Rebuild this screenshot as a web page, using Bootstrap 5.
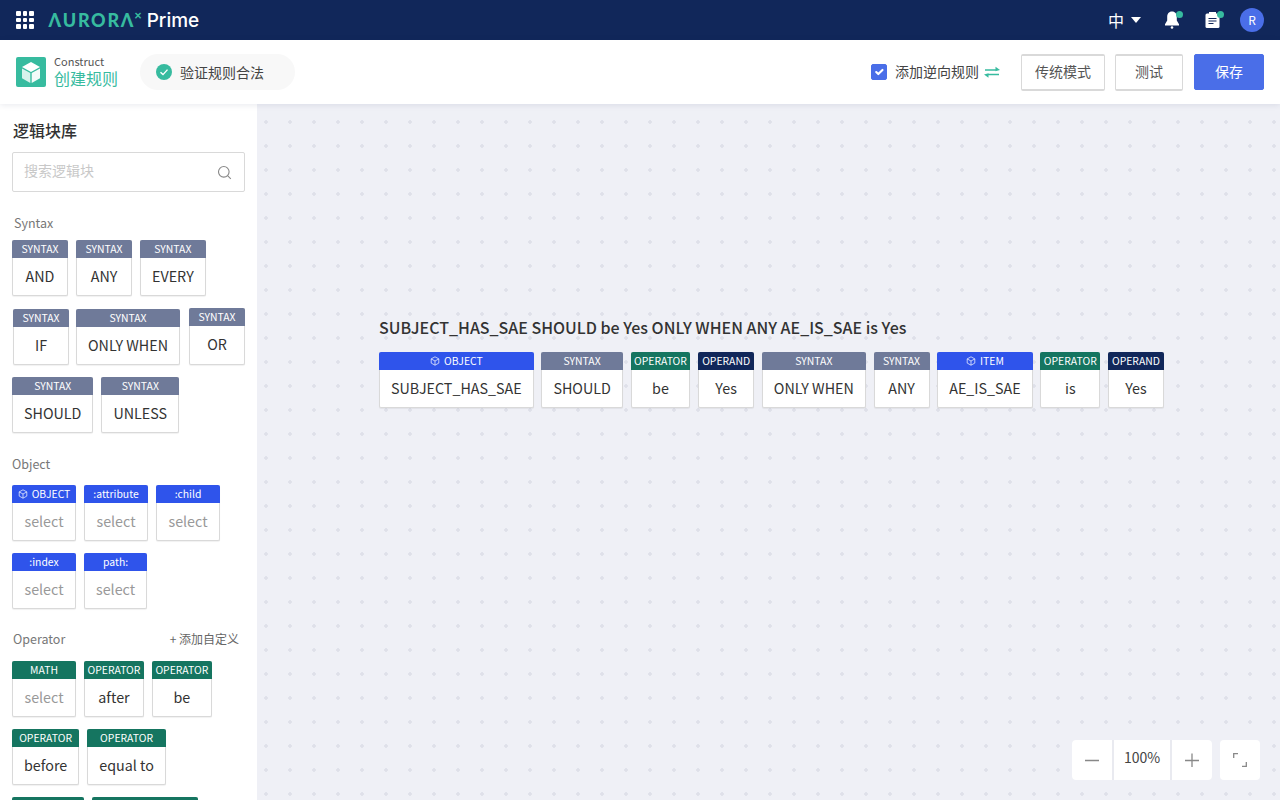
<!DOCTYPE html>
<html lang="zh">
<head>
    <meta charset="UTF-8">
    <title>创建规则</title>
    <link href="https://cdn.jsdelivr.net/npm/bootstrap@5.3.0/dist/css/bootstrap.min.css" rel="stylesheet">
    <script src="https://cdn.jsdelivr.net/npm/bootstrap@5.3.0/dist/js/bootstrap.bundle.min.js"></script>
    <style>
        html, body { height: 100%; overflow: hidden; }
        body { font-family: "Noto Sans CJK SC", "Noto Sans", sans-serif; color: #333; background: #eff0f6; }
        .top-bar { height: 40px; background: #11275a; padding: 0 16px; flex-wrap: nowrap; }
        .grid-icon { display: grid; grid-template-columns: repeat(3, 4.5px); gap: 2px; margin-right: 15px; }
        .grid-icon i { width: 4.5px; height: 4.5px; background: #fff; border-radius: 1px; }
        .logo-word { font-family: "Lato", sans-serif; font-weight: 900; font-size: 18px; letter-spacing: 1.7px; color: #37bb9f; line-height: 1; }
        .logo-x { font-size: 13px; font-weight: 900; color: #37bb9f; margin-left: -1px; margin-top: -9px; line-height: 1; font-family: "Lato", sans-serif; }
        .logo-prime { font-family: "Inter", sans-serif; font-size: 19px; font-weight: 500; color: #fff; margin-left: 5px; line-height: 1; }
        .lang-text { color: #fff; font-size: 16px; line-height: 1; }
        .caret-down { width: 0; height: 0; border-left: 5px solid transparent; border-right: 5px solid transparent; border-top: 6px solid #fff; margin-left: 7px; }
        .notice-wrap { position: relative; display: block; width: 20px; height: 20px; }
        .notice-wrap svg { display: block; }
        .notice-wrap.bell-spot { margin-left: 21px; }
        .notice-wrap.clip-spot { margin-left: 21px; margin-right: 17px; }
        .notice-dot { position: absolute; top: 1px; right: -1px; width: 7px; height: 7px; border-radius: 50%; background: #37bb9f; }
        .user-dot { width: 24px; height: 24px; border-radius: 50%; background: #4a6ee8; color: #fff; font-size: 12px; }
        .sub-bar { height: 64px; background: #fff; padding: 0 16px; box-shadow: 0 1px 6px rgba(30, 40, 90, .1); position: relative; z-index: 2; }
        .cube-box { width: 30px; height: 30px; background: #37bb9f; border-radius: 2px; }
        .crumb-small { font-size: 11px; line-height: 13px; color: #555; margin-top: -1px; }
        .crumb-big { font-size: 16px; line-height: 20px; color: #37bb9f; }
        .check-pill { height: 36px; width: 155px; margin-left: 22px; padding-left: 16px; background: #f8f8f8; border-radius: 18px; font-size: 14px; color: #444; line-height: 34px; }
        .ok-dot { width: 16px; height: 16px; background: #37bb9f; border-radius: 50%; margin-right: 8px; }
        .form-check-input.swap-check, .form-check-input.swap-check:checked { width: 16px; height: 16px; margin: 0 8px 0 1px; background-color: #4a6ee8; border-color: #4a6ee8; border-radius: 2px; }
        .swap-label { font-size: 14px; color: #444; line-height: 1; padding-bottom: 2px; }
        .btn-plain { height: 37px; padding: 0 0 2px; font-size: 14px; color: #555; background: #fff; border: 1px solid #d9d9d9; border-width: 2px 1px; border-radius: 2px; }
        .btn-plain.w1 { width: 84px; margin-left: 20px; }
        .btn-plain.w2 { width: 68px; margin-left: 10px; }
        .btn-keep { width: 70px; height: 36px; padding: 0 0 2px; margin-left: 11px; font-size: 14px; background: #4a6ee8; border-color: #4a6ee8; border-radius: 2px; }
        .main-area { height: 696px; }
        .side-panel { width: 257px; height: 696px; overflow: hidden; background: #fff; padding: 16px 10px 0 12px; flex-shrink: 0; }
        .side-title { font-size: 16px; font-weight: 500; line-height: 22px; margin: -1px 0 11px 1px; color: #333; }
        .search-box { height: 40px; border: 1px solid #d9d9d9; border-radius: 2px; padding: 0 12px 0 11px; margin-bottom: 22px; width: 233px; }
        .search-box input { border: 0; outline: 0; padding: 0 0 3px; font-size: 14px; box-shadow: none; }
        .search-box input::placeholder { color: #c8c8c8; }
        .group-label { font-size: 12.5px; line-height: 18px; color: #777; }
        .syntax-label { margin-left: 2px; margin-bottom: 8px; }
        .object-label { margin-top: 22px; margin-bottom: 12px; }
        .operator-row { margin-top: 21px; margin-bottom: 13px; padding-left: 1px; }
        .custom-add { font-size: 12px; color: #666; padding-right: 8px; line-height: 18px; }
        .block-wrap { display: flex; flex-wrap: wrap; column-gap: 8px; row-gap: 12.5px; }
        .block-wrap.tight-rows { row-gap: 12px; max-width: 220px; }
        .rule-block { display: inline-flex; flex-direction: column; min-width: 56px; background: #fff; border: 1px solid #d9d9d9; border-top: 0; border-radius: 2px; box-shadow: 0 1px 1px rgba(0, 0, 0, .06); text-align: center; }
        .block-head { height: 18px; margin: 0 -1px; padding: 0 3.5px; border-radius: 2px 2px 0 0; font-size: 10.4px; line-height: 18px; color: #fff; white-space: nowrap; display: flex; align-items: center; justify-content: center; gap: 4px; }
        .block-body { height: 37px; line-height: 36px; font-size: 14.3px; color: #333; padding: 0 11px; white-space: nowrap; }
        .block-body.muted-sel { color: #999; }
        .head-syntax { background: #6f7a99; }
        .head-object { background: #2f54eb; }
        .head-operator { background: #157560; }
        .head-operand { background: #11275a; }
        .nudge-if { margin-left: 1px; margin-right: -1px; }
        .nudge-or { margin-left: 1px; margin-top: -1px; }
        .wide-64 { min-width: 64px; }
        .wide-72 { min-width: 72px; }
        .work-canvas { position: relative; background-color: #eff0f6; background-image: radial-gradient(circle, #dfe0e9 1.5px, transparent 2px); background-size: 24px 24px; background-position: -3px 6px; padding: 211px 0 0 122px; }
        .rule-title { font-size: 16px; font-weight: 500; line-height: 24px; margin-bottom: 13px; color: #333; }
        .rule-line { display: flex; column-gap: 7.7px; }
        .zoom-tools { position: absolute; right: 20px; bottom: 20px; display: flex; gap: 8px; }
        .zoom-cell { height: 40px; width: 40px; background: #fff; display: flex; align-items: center; justify-content: center; color: #888; }
        .zoom-cell.mid { width: 56px; margin: 0 2px; font-size: 14px; color: #444; line-height: 1; padding-bottom: 6px; }
        .zoom-group { display: flex; background: #e9eaf0; border-radius: 4px; overflow: hidden; }
        .zoom-one { border-radius: 4px; }
    </style>
</head>
<body>
    <nav class="navbar top-bar d-flex align-items-center justify-content-between">
        <div class="d-flex align-items-center">
            <div class="grid-icon"><i></i><i></i><i></i><i></i><i></i><i></i><i></i><i></i><i></i></div>
            <span class="logo-word">ΛURORΛ</span><span class="logo-x">×</span><span class="logo-prime">Prime</span>
        </div>
        <div class="d-flex align-items-center">
            <span class="lang-text">中</span><span class="caret-down"></span>
            <span class="notice-wrap bell-spot">
                <svg width="20" height="20" viewBox="0 0 20 20"><path fill="#fff" d="M10 1.500c-3.300 0-4.800 2.500-4.800 5.300v3.700L3 14.200v1.300h14v-1.300l-2.200-3.700V6.800c0-2.800-1.500-5.300-4.800-5.300z"/><circle fill="#fff" cx="10" cy="17.500" r="1.300"/></svg>
                <span class="notice-dot"></span>
            </span>
            <span class="notice-wrap clip-spot">
                <svg width="20" height="20" viewBox="0 0 20 20"><rect fill="#fff" x="2.500" y="3.500" width="14" height="14.500" rx="1.500"/><rect fill="#fff" x="6" y="2" width="7" height="3"/><path stroke="#11275a" stroke-width="1.200" d="M5.500 8.500h8M5.500 11h8M5.500 13.500h5"/></svg>
                <span class="notice-dot"></span>
            </span>
            <span class="user-dot d-flex align-items-center justify-content-center">R</span>
        </div>
    </nav>

    <div class="sub-bar d-flex align-items-center justify-content-between">
        <div class="d-flex align-items-center">
            <span class="cube-box d-flex align-items-center justify-content-center me-2">
                <svg width="22" height="24" viewBox="0 0 22 24"><path fill="#fff" d="M11 2l9 5-9 5-9-5z"/><path fill="#d8f2ec" d="M2 8.500l8.300 4.600V23L2 18.300z"/><path fill="#f3fbf9" d="M20 8.500l-8.300 4.600V23L20 18.300z"/></svg>
            </span>
            <div>
                <div class="crumb-small">Construct</div>
                <div class="crumb-big">创建规则</div>
            </div>
            <div class="check-pill d-flex align-items-center">
                <span class="ok-dot d-flex align-items-center justify-content-center">
                    <svg width="10" height="10" viewBox="0 0 10 10"><path d="M1.500 5.200l2.500 2.400 4.500-5" fill="none" stroke="#fff" stroke-width="1.400"/></svg>
                </span>
                验证规则合法
            </div>
        </div>
        <div class="d-flex align-items-center">
            <input class="form-check-input swap-check" type="checkbox" checked>
            <span class="swap-label">添加逆向规则</span>
            <svg class="ms-1" width="18" height="14" viewBox="0 0 18 14"><path d="M2 5h11" stroke="#37bb9f" stroke-width="1.500"/><path d="M12.500 1.800L17 5l-4.500 1.200z" fill="#37bb9f"/><path d="M5 9.500h11" stroke="#37bb9f" stroke-width="1.500"/><path d="M5.500 8.300L1 9.500l4.500 3.200z" fill="#37bb9f"/></svg>
            <button class="btn btn-plain w1">传统模式</button>
            <button class="btn btn-plain w2">测试</button>
            <button class="btn btn-primary btn-keep">保存</button>
        </div>
    </div>

    <div class="main-area d-flex">
        <aside class="side-panel">
            <h6 class="side-title">逻辑块库</h6>
            <div class="search-box d-flex align-items-center">
                <input class="form-control" type="text" placeholder="搜索逻辑块">
                <svg class="flex-shrink-0" width="15" height="15" viewBox="0 0 15 15"><circle cx="6.800" cy="6.800" r="5.300" fill="none" stroke="#888" stroke-width="1.100"/><path d="M10.800 10.800l3 3" stroke="#888" stroke-width="1.100"/></svg>
            </div>

            <div class="group-label syntax-label">Syntax</div>
            <div class="block-wrap">
                <div class="rule-block"><div class="block-head head-syntax">SYNTAX</div><div class="block-body">AND</div></div>
                <div class="rule-block"><div class="block-head head-syntax">SYNTAX</div><div class="block-body">ANY</div></div>
                <div class="rule-block"><div class="block-head head-syntax">SYNTAX</div><div class="block-body">EVERY</div></div>
                <div class="rule-block nudge-if"><div class="block-head head-syntax">SYNTAX</div><div class="block-body">IF</div></div>
                <div class="rule-block"><div class="block-head head-syntax">SYNTAX</div><div class="block-body">ONLY WHEN</div></div>
                <div class="rule-block nudge-or"><div class="block-head head-syntax">SYNTAX</div><div class="block-body">OR</div></div>
                <div class="rule-block"><div class="block-head head-syntax">SYNTAX</div><div class="block-body">SHOULD</div></div>
                <div class="rule-block"><div class="block-head head-syntax">SYNTAX</div><div class="block-body">UNLESS</div></div>
            </div>

            <div class="group-label object-label">Object</div>
            <div class="block-wrap tight-rows">
                <div class="rule-block wide-64"><div class="block-head head-object"><svg width="10" height="10" viewBox="0 0 10 10"><path d="M5 .8l3.800 2.100v4.200L5 9.200 1.200 7.100V2.900zM1.200 2.900L5 5l3.800-2.100M5 5v4.200" fill="none" stroke="#fff" stroke-width=".7"/></svg>OBJECT</div><div class="block-body muted-sel">select</div></div>
                <div class="rule-block wide-64"><div class="block-head head-object">:attribute</div><div class="block-body muted-sel">select</div></div>
                <div class="rule-block wide-64"><div class="block-head head-object">:child</div><div class="block-body muted-sel">select</div></div>
                <div class="rule-block wide-64"><div class="block-head head-object">:index</div><div class="block-body muted-sel">select</div></div>
                <div class="rule-block"><div class="block-head head-object">path:</div><div class="block-body muted-sel">select</div></div>
            </div>

            <div class="d-flex justify-content-between align-items-center operator-row">
                <span class="group-label">Operator</span>
                <span class="custom-add">+ 添加自定义</span>
            </div>
            <div class="block-wrap tight-rows">
                <div class="rule-block wide-64"><div class="block-head head-operator">MATH</div><div class="block-body muted-sel">select</div></div>
                <div class="rule-block"><div class="block-head head-operator">OPERATOR</div><div class="block-body">after</div></div>
                <div class="rule-block"><div class="block-head head-operator">OPERATOR</div><div class="block-body">be</div></div>
                <div class="rule-block"><div class="block-head head-operator">OPERATOR</div><div class="block-body">before</div></div>
                <div class="rule-block"><div class="block-head head-operator">OPERATOR</div><div class="block-body">equal to</div></div>
                <div class="rule-block wide-72"><div class="block-head head-operator">OPERATOR</div><div class="block-body">exists</div></div>
                <div class="rule-block"><div class="block-head head-operator">OPERATOR</div><div class="block-body">greater than</div></div>
            </div>
        </aside>

        <main class="work-canvas flex-grow-1">
            <div class="rule-title">SUBJECT_HAS_SAE SHOULD be Yes ONLY WHEN ANY AE_IS_SAE is Yes</div>
            <div class="rule-line">
                <div class="rule-block"><div class="block-head head-object"><svg width="10" height="10" viewBox="0 0 10 10"><path d="M5 .8l3.800 2.100v4.200L5 9.200 1.200 7.100V2.900zM1.200 2.900L5 5l3.800-2.100M5 5v4.200" fill="none" stroke="#fff" stroke-width=".7"/></svg>OBJECT</div><div class="block-body">SUBJECT_HAS_SAE</div></div>
                <div class="rule-block"><div class="block-head head-syntax">SYNTAX</div><div class="block-body">SHOULD</div></div>
                <div class="rule-block"><div class="block-head head-operator">OPERATOR</div><div class="block-body">be</div></div>
                <div class="rule-block"><div class="block-head head-operand">OPERAND</div><div class="block-body">Yes</div></div>
                <div class="rule-block"><div class="block-head head-syntax">SYNTAX</div><div class="block-body">ONLY WHEN</div></div>
                <div class="rule-block"><div class="block-head head-syntax">SYNTAX</div><div class="block-body">ANY</div></div>
                <div class="rule-block"><div class="block-head head-object"><svg width="10" height="10" viewBox="0 0 10 10"><path d="M5 .8l3.800 2.100v4.200L5 9.200 1.200 7.100V2.900zM1.200 2.900L5 5l3.800-2.100M5 5v4.200" fill="none" stroke="#fff" stroke-width=".7"/></svg>ITEM</div><div class="block-body">AE_IS_SAE</div></div>
                <div class="rule-block"><div class="block-head head-operator">OPERATOR</div><div class="block-body">is</div></div>
                <div class="rule-block"><div class="block-head head-operand">OPERAND</div><div class="block-body">Yes</div></div>
            </div>

            <div class="zoom-tools">
                <div class="zoom-group">
                    <div class="zoom-cell"><svg width="14" height="14" viewBox="0 0 14 14"><path d="M0 7.500h14" stroke="#888" stroke-width="1.300"/></svg></div>
                    <div class="zoom-cell mid">100%</div>
                    <div class="zoom-cell"><svg width="14" height="14" viewBox="0 0 14 14"><path d="M0 7.500h14M7 .5v14" stroke="#888" stroke-width="1.300"/></svg></div>
                </div>
                <div class="zoom-cell zoom-one"><svg width="14" height="14" viewBox="0 0 14 14"><path d="M.7 5V.7H5M13.300 9v4.300H9" fill="none" stroke="#888" stroke-width="1.300"/></svg></div>
            </div>
        </main>
    </div>
</body>
</html>
